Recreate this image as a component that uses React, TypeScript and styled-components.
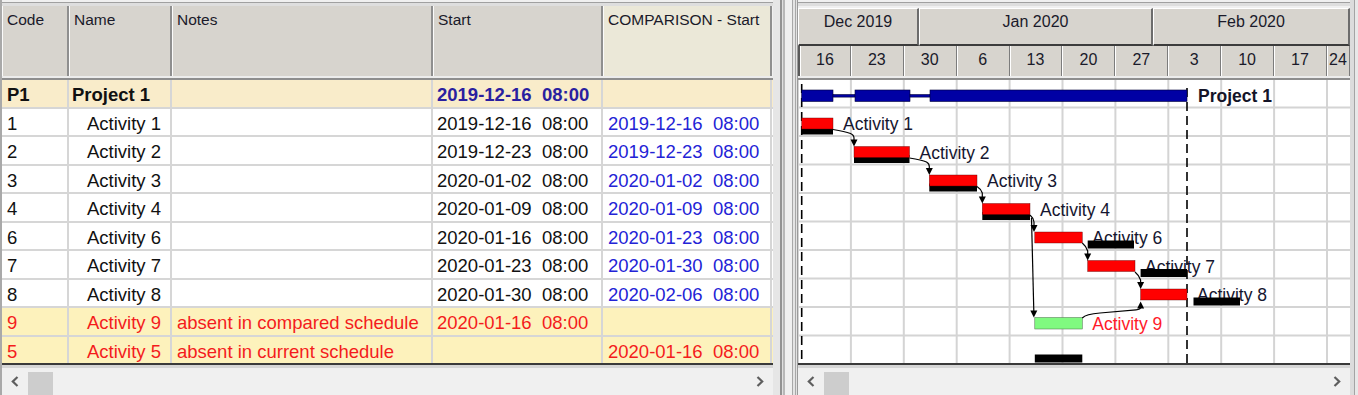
import React from "react";
import styled, { createGlobalStyle } from "styled-components";

const Global = createGlobalStyle`
  html, body { margin: 0; padding: 0; background: #f0f0f0; }
  body { font-family: "Liberation Sans", Arial, sans-serif; color: #111; }
`;

const COLS = "67px 103px 261px 170px 169px";
const ROW_H = 28.5;
const WEEK = 52.9;
const DAY = WEEK / 7;
const X0 = 798;
const Y0 = 80;

type Tone = "plain" | "project" | "absent";

interface Activity {
  code: string;
  name: string;
  notes: string;
  start: string;
  comp: string;
  tone: Tone;
}

const rows: Activity[] = [
  { code: "P1", name: "Project 1", notes: "", start: "2019-12-16  08:00", comp: "", tone: "project" },
  { code: "1", name: "Activity 1", notes: "", start: "2019-12-16  08:00", comp: "2019-12-16  08:00", tone: "plain" },
  { code: "2", name: "Activity 2", notes: "", start: "2019-12-23  08:00", comp: "2019-12-23  08:00", tone: "plain" },
  { code: "3", name: "Activity 3", notes: "", start: "2020-01-02  08:00", comp: "2020-01-02  08:00", tone: "plain" },
  { code: "4", name: "Activity 4", notes: "", start: "2020-01-09  08:00", comp: "2020-01-09  08:00", tone: "plain" },
  { code: "6", name: "Activity 6", notes: "", start: "2020-01-16  08:00", comp: "2020-01-23  08:00", tone: "plain" },
  { code: "7", name: "Activity 7", notes: "", start: "2020-01-23  08:00", comp: "2020-01-30  08:00", tone: "plain" },
  { code: "8", name: "Activity 8", notes: "", start: "2020-01-30  08:00", comp: "2020-02-06  08:00", tone: "plain" },
  { code: "9", name: "Activity 9", notes: "absent in compared schedule", start: "2020-01-16  08:00", comp: "", tone: "absent" },
  { code: "5", name: "Activity 5", notes: "absent in current schedule", start: "", comp: "2020-01-16  08:00", tone: "absent" },
];

/* ---------- frame ---------- */

const Window = styled.div`
  display: flex;
  width: 1358px;
  height: 395px;
  overflow: hidden;
  background: #f0f0f0;
`;

const LeftPane = styled.div`
  display: flex;
  flex-direction: column;
  flex: 0 0 auto;
  width: 771px;
  border-left: 2px solid #a9a9a9;
`;

const RightPane = styled.div`
  display: flex;
  flex-direction: column;
  flex: 1 1 auto;
  min-width: 0;
  padding-left: 3px;
  padding-right: 8px;
  background: linear-gradient(to right, #a8a8a8 0 1px, #e2e2e2 1px 2px, #9a9a9a 2px 3px, transparent 3px),
    linear-gradient(to left, #e8e8e8 0 3px, #a4a4a4 3px 4px, #dcdcdc 4px 8px, transparent 8px);
`;

const Splitter = styled.div`
  flex: 0 0 22px;
  background: linear-gradient(
    to right,
    #e6e6e6 0 7px,
    #939393 7px 9px,
    #e0e0e0 9px 10.5px,
    #b8b8b8 10.5px 12px,
    #f0f0f0 12px 19px,
    #a8a8a8 19px 20.5px,
    #e4e4e4 20.5px 22px
  );
`;

const TopBand = styled.div`
  flex: 0 0 6px;
  background: linear-gradient(#f0f0f0 0 2px, #a0a0a0 2px 3px, #dedede 3px 6px);
`;

const HeaderSep = styled.div`
  flex: 0 0 4px;
  background: linear-gradient(#ececec 0 2px, #8e8e8e 2px 4px);
`;

const BottomGap = styled.div`
  flex: 0 0 3px;
  background: #d6d6d6;
`;

/* ---------- table ---------- */

const TableHeader = styled.div`
  display: grid;
  grid-template-columns: ${COLS};
  flex: 0 0 70px;
`;

const HeadCell = styled.div<{ $alt?: boolean }>`
  background: ${(p) => (p.$alt ? "#ebe8d8" : "#d7d4ce")};
  border-right: 2px solid #8f8f8f;
  box-shadow: inset 1px 0 0 #fbfbfb;
  font-size: 15.5px;
  line-height: 18px;
  padding: 5px 0 0 5px;
  color: #1a1a2a;
  white-space: nowrap;
  overflow: hidden;
`;

const TableBody = styled.div`
  display: flex;
  flex-direction: column;
  flex: 0 0 auto;
`;

const toneBg: Record<Tone, string> = {
  plain: "#ffffff",
  project: "#f9ecca",
  absent: "#fdf2bc",
};

const Row = styled.div<{ $tone: Tone; $last?: boolean }>`
  display: grid;
  grid-template-columns: ${COLS};
  height: ${ROW_H}px;
  box-sizing: border-box;
  background: ${(p) => toneBg[p.$tone]};
  border-bottom: 2px solid ${(p) => (p.$last ? "#3a3a3a" : "#d6d6d6")};
  font-size: 18.5px;
  font-weight: ${(p) => (p.$tone === "project" ? 700 : 400)};
`;

const Cell = styled.div<{ $pad?: number; $color?: string }>`
  display: flex;
  align-items: center;
  padding: 4px 0 0 ${(p) => p.$pad ?? 5}px;
  border-right: 2px solid #d6d6d6;
  color: ${(p) => p.$color ?? "#111"};
  white-space: pre;
  overflow: hidden;
`;

/* ---------- scrollbar ---------- */

const ScrollBar = styled.div`
  display: flex;
  flex: 0 0 27px;
  background: #f0f0f0;
`;

const ArrowBtn = styled.div`
  flex: 0 0 26px;
  display: flex;
  align-items: center;
  justify-content: center;
`;

const Thumb = styled.div`
  flex: 0 0 25px;
  margin-top: 4px;
  background: #cdcdcd;
`;

const Track = styled.div`
  flex: 1 1 auto;
`;

const Chevron = ({ dir }: { dir: "left" | "right" }) => (
  <svg width="8" height="11" viewBox="0 0 8 11">
    <path
      d={dir === "left" ? "M6.5 1 L1.8 5.5 L6.5 10" : "M1.5 1 L6.2 5.5 L1.5 10"}
      fill="none"
      stroke="#5e5e5e"
      strokeWidth="2.2"
    />
  </svg>
);

const Scroller = () => (
  <ScrollBar>
    <ArrowBtn>
      <Chevron dir="left" />
    </ArrowBtn>
    <Thumb />
    <Track />
    <ArrowBtn>
      <Chevron dir="right" />
    </ArrowBtn>
  </ScrollBar>
);

/* ---------- gantt header ---------- */

const GanttHeader = styled.div`
  display: flex;
  flex-direction: column;
  flex: 0 0 70px;
`;

const MonthRow = styled.div`
  display: flex;
  height: 40px;
  padding-top: 2px;
  box-sizing: border-box;
`;

const MonthCell = styled.div<{ $w: number }>`
  flex: 0 0 ${(p) => p.$w}px;
  box-sizing: border-box;
  background: #d7d4ce;
  border-top: 1px solid #ffffff;
  border-left: 1px solid #ffffff;
  border-right: 2px solid #6c6c6c;
  border-bottom: 2px solid #3c3c3c;
  display: flex;
  justify-content: center;
  padding-top: 4px;
  font-size: 16px;
  color: #1a1a2a;
`;

const DayRow = styled.div`
  display: flex;
  height: 30px;
  border-left: 2px solid #5a5a5a;
  box-sizing: border-box;
`;

const DayCell = styled.div<{ $w: number }>`
  flex: 0 0 ${(p) => p.$w}px;
  box-sizing: border-box;
  background: #d7d4ce;
  border-right: 1px solid #7c7c7c;
  box-shadow: inset 1px 0 0 #ffffff;
  display: flex;
  justify-content: center;
  padding-top: 5px;
  font-size: 16px;
  color: #1a1a2a;
  overflow: hidden;
`;

/* ---------- gantt chart ---------- */

const ChartArea = styled.div`
  flex: 0 0 ${ROW_H * 10}px;
  background: #ffffff;
  border-bottom: 2px solid #3a3a3a;
  box-sizing: border-box;
  overflow: hidden;
`;

const ChartSvg = styled.svg`
  display: block;
  font-family: "Liberation Sans", Arial, sans-serif;
`;

const top = (i: number) => Y0 + ROW_H * i;

interface Bar {
  row: number;
  x1: number;
  x2: number;
}

const redBars: Bar[] = [
  { row: 1, x1: 801.7, x2: 833 },
  { row: 2, x1: 854, x2: 909.5 },
  { row: 3, x1: 929.3, x2: 977 },
  { row: 4, x1: 982.3, x2: 1030 },
  { row: 5, x1: 1034.8, x2: 1082.3 },
  { row: 6, x1: 1087.7, x2: 1135 },
  { row: 7, x1: 1140.6, x2: 1187 },
];

const compBars: Bar[] = [
  { row: 1, x1: 801.7, x2: 833 },
  { row: 2, x1: 854, x2: 909.5 },
  { row: 3, x1: 929.3, x2: 977 },
  { row: 4, x1: 982.3, x2: 1030 },
  { row: 5, x1: 1087.7, x2: 1134 },
  { row: 6, x1: 1140.6, x2: 1187 },
  { row: 7, x1: 1193.5, x2: 1240 },
  { row: 9, x1: 1034.8, x2: 1082.3 },
];

const labels = [
  { row: 1, x: 843, text: "Activity 1" },
  { row: 2, x: 919.5, text: "Activity 2" },
  { row: 3, x: 987, text: "Activity 3" },
  { row: 4, x: 1040, text: "Activity 4" },
  { row: 5, x: 1092.3, text: "Activity 6" },
  { row: 6, x: 1145, text: "Activity 7" },
  { row: 7, x: 1197, text: "Activity 8" },
];

const ArrowDown = ({ x, y }: { x: number; y: number }) => (
  <polygon points={`${x - 3.5},${y - 7} ${x + 3.5},${y - 7} ${x},${y}`} fill="#000" />
);

const ArrowUp = ({ x, y }: { x: number; y: number }) => (
  <polygon points={`${x - 3.5},${y + 7} ${x + 3.5},${y + 7} ${x},${y}`} fill="#000" />
);

const Chart = () => {
  const W = 552;
  const H = ROW_H * 10;
  const vlines = [];
  for (let k = 0; k <= 10; k++) vlines.push(X0 + WEEK * k);
  const hlines = [];
  for (let i = 1; i <= 9; i++) hlines.push(top(i) - 1);

  return (
    <ChartSvg width={W} height={H} viewBox={`${X0} ${Y0} ${W} ${H}`}>
      {vlines.map((x) => (
        <line key={"v" + x} x1={x} x2={x} y1={Y0} y2={Y0 + H} stroke="#d4d4d4" strokeWidth="2" />
      ))}
      {hlines.map((y) => (
        <line key={"h" + y} x1={X0} x2={X0 + W} y1={y} y2={y} stroke="#d4d4d4" strokeWidth="2" />
      ))}

      {/* baseline dashed markers */}
      <line x1={801.7} x2={801.7} y1={84} y2={364} stroke="#000" strokeWidth="1.6" strokeDasharray="9 5" />
      <line x1={1187} x2={1187} y1={88} y2={364} stroke="#000" strokeWidth="1.6" strokeDasharray="9 5" />

      {/* project summary */}
      <g fill="#0000a4" stroke="#00003a" strokeWidth="0.6">
        <rect x={801.7} y={top(0) + 10} width={833 - 801.7} height={11.5} />
        <rect x={833} y={top(0) + 14.5} width={22} height={2.6} />
        <rect x={855} y={top(0) + 10} width={910 - 855} height={11.5} />
        <rect x={910} y={top(0) + 14.5} width={20} height={2.6} />
        <rect x={930} y={top(0) + 10} width={1187 - 930} height={11.5} />
      </g>
      <text x={1198} y={top(0) + 22} fontSize="17.5" fontWeight="700" fill="#141428">
        Project 1
      </text>

      {/* labels */}
      {labels.map((l) => (
        <text key={l.text} x={l.x} y={top(l.row) + 21.5} fontSize="17.5" fill="#161630">
          {l.text}
        </text>
      ))}
      <text x={1092.3} y={top(8) + 21.5} fontSize="17.5" fill="#ff1a2a">
        Activity 9
      </text>

      {/* comparison bars */}
      {compBars.map((b) => (
        <rect key={"c" + b.row} x={b.x1} y={top(b.row) + 18} width={b.x2 - b.x1} height={8} fill="#000" />
      ))}

      {/* current bars */}
      {redBars.map((b) => (
        <rect
          key={"r" + b.row}
          x={b.x1}
          y={top(b.row) + 9.5}
          width={b.x2 - b.x1}
          height={11}
          fill="#ff0000"
          stroke="#5a0000"
          strokeWidth="0.4"
        />
      ))}
      <rect x={1034.8} y={top(8) + 9.5} width={1082.3 - 1034.8} height={11.5} fill="#80fa80" stroke="#4a6a4a" strokeWidth="0.5" />

      {/* links */}
      <g fill="none" stroke="#000" strokeWidth="1.2">
        <path d="M833 129.5 Q845 131.5 850.5 133.5 Q854 135 854 138 L854 140" />
        <path d="M909.5 158 Q922 160 926.5 162 Q929.3 163.5 929.3 166.5 L929.3 168.5" />
        <path d="M977 186.5 Q981 189 982.3 193 L982.3 197" />
        <path d="M1030 215 Q1033.5 218 1034 222 L1034 225.5" />
        <path d="M1031.5 218 L1033.8 311" />
        <path d="M1082.3 243 Q1086 246 1087.7 251 L1087.7 254" />
        <path d="M1135 272 Q1138.8 275 1140.6 280 L1140.6 282.5" />
        <path d="M1082.3 318 Q1086 314 1100 313 L1136 309.8 Q1140.6 309.3 1140.6 307.5" />
      </g>
      <ArrowDown x={854} y={146.5} />
      <ArrowDown x={929.3} y={175} />
      <ArrowDown x={982.3} y={203.5} />
      <ArrowDown x={1034} y={232} />
      <ArrowDown x={1033.8} y={317.5} />
      <ArrowDown x={1087.7} y={260.5} />
      <ArrowDown x={1140.6} y={289} />
      <ArrowUp x={1140.6} y={301.5} />
    </ChartSvg>
  );
};

/* ---------- app ---------- */

const toneColors = (t: Tone) => {
  if (t === "absent") {
    const r = "#f41c1c";
    return { code: r, name: r, notes: r, start: r, comp: r };
  }
  if (t === "project") {
    return { code: "#111", name: "#111", notes: "#111", start: "#2a1fa0", comp: "#2323d6" };
  }
  return { code: "#111", name: "#111", notes: "#111", start: "#111", comp: "#2323d6" };
};

const months = [
  { label: "Dec 2019", w: 16 * DAY },
  { label: "Jan 2020", w: 31 * DAY },
  { label: "Feb 2020", w: 552 - 47 * DAY },
];

const days = ["16", "23", "30", "6", "13", "20", "27", "3", "10", "17", "24"];

export default function App() {
  return (
    <>
      <Global />
      <Window>
        <LeftPane>
          <TopBand />
          <TableHeader>
            <HeadCell>Code</HeadCell>
            <HeadCell>Name</HeadCell>
            <HeadCell>Notes</HeadCell>
            <HeadCell>Start</HeadCell>
            <HeadCell $alt>COMPARISON - Start</HeadCell>
          </TableHeader>
          <HeaderSep />
          <TableBody>
            {rows.map((r, i) => {
              const c = toneColors(r.tone);
              return (
                <Row key={r.code} $tone={r.tone} $last={i === rows.length - 1}>
                  <Cell $color={c.code}>{r.code}</Cell>
                  <Cell $color={c.name} $pad={r.tone === "project" ? 3 : 18}>
                    {r.name}
                  </Cell>
                  <Cell $color={c.notes}>{r.notes}</Cell>
                  <Cell $color={c.start} $pad={4}>
                    {r.start}
                  </Cell>
                  <Cell $color={c.comp}>{r.comp}</Cell>
                </Row>
              );
            })}
          </TableBody>
          <BottomGap />
          <Scroller />
        </LeftPane>
        <Splitter />
        <RightPane>
          <TopBand />
          <GanttHeader>
            <MonthRow>
              {months.map((m) => (
                <MonthCell key={m.label} $w={m.w}>
                  {m.label}
                </MonthCell>
              ))}
            </MonthRow>
            <DayRow>
              {days.map((d, i) => (
                <DayCell key={d + i} $w={i === days.length - 1 ? 552 - WEEK * 10 : i === 0 ? WEEK - 2 : WEEK}>
                  {d}
                </DayCell>
              ))}
            </DayRow>
          </GanttHeader>
          <HeaderSep />
          <ChartArea>
            <Chart />
          </ChartArea>
          <BottomGap />
          <Scroller />
        </RightPane>
      </Window>
    </>
  );
}
